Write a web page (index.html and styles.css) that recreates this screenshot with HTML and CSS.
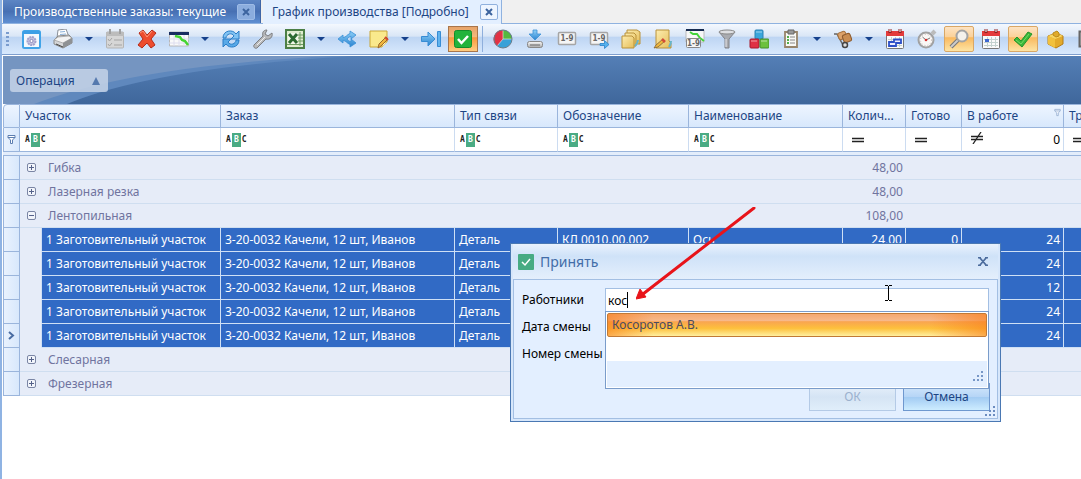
FILE: index.html
```html
<!DOCTYPE html>
<html lang="ru">
<head>
<meta charset="utf-8">
<title>График производства</title>
<link rel="stylesheet" href="styles.css">
</head>
<body>
<svg class="defs" aria-hidden="true">
  <defs>
    <linearGradient id="gBlue" x1="0" y1="0" x2="0" y2="1"><stop offset="0" stop-color="#8fd0f8"/><stop offset="1" stop-color="#2a83d0"/></linearGradient>
    <linearGradient id="gGray" x1="0" y1="0" x2="0" y2="1"><stop offset="0" stop-color="#fafafa"/><stop offset="1" stop-color="#a9a9a9"/></linearGradient>
    <linearGradient id="gYellow" x1="0" y1="0" x2="1" y2="1"><stop offset="0" stop-color="#fdedb0"/><stop offset="1" stop-color="#e5bd58"/></linearGradient>
    <symbol id="expand" viewBox="0 0 9 9"><rect x=".5" y=".5" width="8" height="8" rx="1.5" fill="#f2f5fb" stroke="#7b86a5"/><path d="M2 4.500h5M4.500 2v5" stroke="#55628a"/></symbol>
    <symbol id="collapse" viewBox="0 0 9 9"><rect x=".5" y=".5" width="8" height="8" rx="1.500" fill="#f2f5fb" stroke="#7b86a5"/><path d="M2 4.500h5" stroke="#55628a"/></symbol>
    <symbol id="equal" viewBox="0 0 14 12"><path d="M1 4.500h12M1 7.500h12" stroke="#222" stroke-width="1.300"/></symbol>
    <symbol id="funnel" viewBox="0 0 9 11"><path d="M1 1.500h7v2L5.500 6v3.500h-2V6L1 3.500z M1 3.500h7" fill="#fff" stroke="#5c7eb0"/></symbol>
    <symbol id="calendar" viewBox="0 0 20 20"><rect x="1.500" y="2.500" width="17" height="17" rx="1" fill="#fafafa" stroke="#777"/><path d="M1 2h18v5H1z" fill="#e33b3b"/><path d="M5 0v4M15 0v4" stroke="#8c2020" stroke-width="3"/><path d="M5 0v3M15 0v3" stroke="#fff"/><path d="M3 10.500h14M3 13.500h14M3 16.500h14M6.500 8v10M10.500 8v10M14.500 8v10" stroke="#c3d2cf"/></symbol>
  </defs>
</svg>
<main class="app">
  <nav class="tabs">
    <div class="tab tab-dark"><button class="tab-name">Производственные заказы: текущие</button><button class="close" aria-label="Закрыть"><svg viewBox="0 0 8 8"><path d="M1 1l6 6M7 1L1 7"/></svg></button></div>
    <div class="tab tab-light"><button class="tab-name">График производства [Подробно]</button><button class="close" aria-label="Закрыть"><svg viewBox="0 0 8 8"><path d="M1 1l6 6M7 1L1 7"/></svg></button></div>
  </nav>
  <div class="toolbar">
    <span class="grip"></span>
    <button class="tool" aria-label="Вид"><svg viewBox="0 0 20 20"><rect x="2" y="2" width="17" height="17" rx="1.500" fill="#f4f8fd" stroke="#41a4e8" stroke-width="2"/><path d="M2 2h17v3H2z" fill="#3c9fe6"/><circle cx="10.500" cy="12" r="4" fill="#c8c6e2" stroke="#a3a2cc" stroke-width="2" stroke-dasharray="2 .7"/><circle cx="10.500" cy="12" r="1.600" fill="#fff" stroke="#8887b8"/></svg></button>
    <button class="tool" aria-label="Печать"><svg viewBox="0 0 20 20"><path d="M4 9L5 1l8-1 3 8z" fill="#fff" stroke="#8a9099"/><path d="M7 3l5-.5M7 5.500l6-.5" stroke="#8ab0d8"/><path d="M1 11l4-4 11-1 3 3v5l-9 5-9-4z" fill="#d5d6d8" stroke="#888"/><path d="M1 11l9 3 9-5-3-2-11 1z" fill="#f3f3f3" stroke="#999" stroke-width=".7"/><path d="M3 15l7 3" stroke="#444"/><path d="M10 14v5l9-5V9z" fill="#8e9194"/></svg></button>
    <button class="drop" aria-label="Ещё"></button>
    <button class="tool" aria-label="План" disabled><svg viewBox="0 0 20 20"><rect x="1.500" y="3" width="17" height="16" rx="1" fill="#d6d6d6" stroke="#b4b4b4"/><path d="M1 3h18v4H1z" fill="#bcbcbc"/><path d="M5 0v5M15 0v5" stroke="#a0a0a0" stroke-width="2"/><path d="M3 10l1.500 2L7 9M3 15l1.500 2L7 14M9 11h8M9 16h8" fill="none" stroke="#a4a4a4"/></svg></button>
    <button class="tool" aria-label="Удалить"><svg viewBox="0 0 20 20"><path d="M2 4l4-3 4 5 5-5 4 3-5 6 4 6-4 3-4-5-5 5-4-3 5-6z" fill="#ed4c2e" stroke="#b52b18"/><path d="M3 4l3-2 4 6 5-6" fill="none" stroke="#ff9779"/></svg></button>
    <button class="tool" aria-label="График"><svg viewBox="0 0 20 20"><path d="M.5 3h19v14H.5z" fill="#f9f9f9" stroke="#b8b8b8"/><path d="M0 3h20v3H0z" fill="#182c60"/><path d="M5 6v11M10 6v11M15 6v11M0 10h20M0 14h20" stroke="#dde"/><path d="M6 7l5 1 2 3 3 1 3 4" fill="none" stroke="#45d532" stroke-width="2.500"/></svg></button>
    <button class="drop" aria-label="Ещё"></button>
    <button class="tool" aria-label="Обновить"><svg viewBox="0 0 20 20"><path d="M2 9c0-8 10-9 13-4l3-3v8h-8l3-3C11 3 5 5 5 9z" fill="#82c3f3" stroke="#2a7dc6"/><path d="M18 11c0 8-10 9-13 4l-3 3v-8h8l-3 3c2 4 8 2 8-2z" fill="#58a9e8" stroke="#2a7dc6"/></svg></button>
    <button class="tool" aria-label="Настроить"><svg viewBox="0 0 20 20"><path d="M14 1c-4 0-5 3-4 6l-9 9c-1 2 1 4 3 3l9-9c4 1 7-2 6-6l-4 3-3-2z" fill="#b9babc" stroke="#7c7d80"/><path d="M4 16l8-8" stroke="#eee"/></svg></button>
    <button class="tool" aria-label="Excel"><svg viewBox="0 0 20 20"><rect x="1" y="1" width="18" height="18" fill="#dfeccf" stroke="#4c7f45" stroke-width="2"/><path d="M15 3v14M2 15.500h16M13 6h5M13 9h5M13 12h5" stroke="#6f9c62"/><path d="M3 4h10v11H3z" fill="#f2f7ea"/><path d="M4 5l8 9M12 5l-8 9" stroke="#2c6b31" stroke-width="3"/></svg></button>
    <button class="drop" aria-label="Ещё"></button>
    <button class="tool" aria-label="Разделить"><svg viewBox="0 0 20 20"><path d="M1 10l5-4v2.500c3 0 4-3 7-4V2l6 4-5 4V7.500c-2 0-3 1.500-4 2.500 1 1 2 2.500 4 2.500V10l5 4-6 4v-2.500c-3-1-4-4-7-4V14z" fill="url(#gBlue)" stroke="#3a8fd6" stroke-width=".8"/></svg></button>
    <button class="tool" aria-label="Заметка"><svg viewBox="0 0 20 20"><path d="M1 2h17v11l-5 5H1z" fill="#fae98c" stroke="#c9a739"/><path d="M13 18v-5h5" fill="#fff5bf" stroke="#c9a739"/><path d="M9 19l1-4 7-7 2 2-7 7z" fill="#efb63e" stroke="#9e6a2a"/><path d="M16 8l3 3" stroke="#d34831" stroke-width="2"/></svg></button>
    <button class="drop" aria-label="Ещё"></button>
    <button class="tool" aria-label="В конец"><svg viewBox="0 0 20 20"><path d="M.5 7.500H7V3l7 7-7 7v-4.500H.5z" fill="url(#gBlue)" stroke="#388cd4"/><path d="M16.500 2.500h3v15h-3z" fill="#61b3ed" stroke="#388cd4"/></svg></button>
    <button class="tool pressed" aria-label="Принять"><svg viewBox="0 0 20 20"><rect x="1.500" y="1.500" width="17" height="17" rx="2" fill="#22b33b" stroke="#138d2b"/><path d="M5 10l3.500 4L15 7" fill="none" stroke="#fff" stroke-width="2.500"/></svg></button>
    <span class="separator"></span>
    <button class="tool" aria-label="Диаграмма"><svg viewBox="0 0 20 20"><circle cx="10" cy="10" r="9" fill="#38a1d8"/><path d="M10 10V1a9 9 0 0 0-6 16z" fill="#e13245"/><path d="M10 10V1a9 9 0 0 1 9 9z" fill="#54b83f"/><path d="M10 1v9H19M10 10l-6 7" fill="none" stroke="#eee" stroke-width=".6"/><circle cx="10" cy="10" r="9" fill="none" stroke="#6a7c88"/></svg></button>
    <button class="tool" aria-label="Загрузить"><svg viewBox="0 0 20 20"><path d="M8 1h4v4h4l-6 6-6-6h4z" fill="url(#gBlue)" stroke="#3a91d5" stroke-width=".8"/><rect x="2.500" y="12.500" width="15" height="6" rx="2" fill="url(#gGray)" stroke="#888"/><path d="M5 16h10" stroke="#666"/></svg></button>
    <button class="tool" aria-label="Номера"><svg viewBox="0 0 20 20"><rect x="1.500" y="3.500" width="17" height="12" rx="1" fill="#f5f5f5" stroke="#a5a5a5" stroke-width="1.500"/><text x="10" y="12" class="digits">1-9</text></svg></button>
    <button class="tool" aria-label="Перенумеровать"><svg viewBox="0 0 20 20"><rect x="1.500" y="3.500" width="17" height="12" rx="1" fill="#f5f5f5" stroke="#a5a5a5" stroke-width="1.500"/><text x="10" y="12" class="digits">1-9</text><path d="M11 14.500h4.500v-3l4.500 4-4.500 4v-3H11z" fill="#55b2ee" stroke="#2883cc" stroke-width=".8"/></svg></button>
    <button class="tool" aria-label="Папки"><svg viewBox="0 0 20 20"><path d="M6 1h10l3 2v12H6z" fill="url(#gYellow)" stroke="#ba923a"/><path d="M4 4h9l2 2v11H4z" fill="url(#gYellow)" stroke="#ba923a"/><path d="M1 7h10l2 2v10H1z" fill="url(#gYellow)" stroke="#ba923a"/><path d="M14 17c2-2 3-3 3-6" stroke="#67b4c9" stroke-width="2" fill="none"/></svg></button>
    <button class="tool" aria-label="Изменить"><svg viewBox="0 0 20 20"><path d="M3 1h13v11l2 2v5H3z" fill="url(#gYellow)" stroke="#ba923a"/><path d="M16 18c1-2 2-3 2-6" stroke="#67b4c9" stroke-width="2" fill="none"/><path d="M1 19l2-3 7-6 2 2-7 6z" fill="#efb83d" stroke="#7d6137" stroke-width=".8"/><path d="M9 10l3 3" stroke="#d44c38" stroke-width="2.500"/></svg></button>
    <button class="tool" aria-label="План-график"><svg viewBox="0 0 20 20"><path d="M1 1h18v12H1z" fill="#f7f7f7" stroke="#bbb"/><path d="M1 0h18v2H1z" fill="#182c50"/><path d="M5 3l3 2h4l3 4 4 3" fill="none" stroke="#43d43a" stroke-width="2"/><rect x="1.500" y="9.500" width="14" height="9" rx="1" fill="#f6f6f6" stroke="#888"/><text x="8.500" y="17" class="digits">1-9</text></svg></button>
    <button class="tool" aria-label="Фильтр"><svg viewBox="0 0 20 20"><path d="M2 3l6 7v9h4v-9l6-7z" fill="#a9abb0" stroke="#808289"/><ellipse cx="10" cy="3" rx="8" ry="2" fill="#dedfe2" stroke="#888"/><path d="M9 10v8" stroke="#e9e9ed"/></svg></button>
    <button class="tool" aria-label="Кубики"><svg viewBox="0 0 20 20"><rect x="6" y="1" width="8" height="9" rx="1" fill="#3aa6dc" stroke="#2a82b4"/><rect x="1" y="10" width="9" height="9" rx="1" fill="#df3044" stroke="#a7182d"/><rect x="11" y="10" width="9" height="9" rx="1" fill="#6cc13d" stroke="#44902a"/><path d="M7 3h6M2 12h6M12 12h6" stroke="#ffffff88"/></svg></button>
    <button class="tool" aria-label="Задания"><svg viewBox="0 0 20 20"><path d="M4 3h12v15H4z" fill="#f8f8f5" stroke="#98856b" stroke-width="1.800"/><path d="M7 1h6v4H7z" fill="#999" stroke="#666"/><path d="M6 8h2M6 11h2M6 14h2" stroke="#52af4d" stroke-width="2"/><path d="M9 8h5M9 11h5M9 14h5" stroke="#888"/></svg></button>
    <button class="drop" aria-label="Ещё"></button>
    <button class="tool" aria-label="Тележка"><svg viewBox="0 0 20 20"><path d="M1 5l3 0 6 11h5" fill="none" stroke="#666" stroke-width="1.500"/><rect x="5" y="3" width="8" height="7" rx="2" transform="rotate(-20 9 6)" fill="#dca26a" stroke="#a5713d"/><rect x="10" y="5" width="8" height="8" rx="2" transform="rotate(-20 14 9)" fill="#c98d52" stroke="#8f5b2d"/><circle cx="12" cy="16" r="2.500" fill="#ddd" stroke="#444" stroke-width="1.500"/></svg></button>
    <button class="drop" aria-label="Ещё"></button>
    <button class="tool" aria-label="Календарь графика"><svg viewBox="0 0 20 20"><use href="#calendar"/><path d="M4 17v-4h5v-2.500h7V14h-5v3z" fill="#eef" stroke="#2d50c8" stroke-width="1.800"/></svg></button>
    <button class="tool" aria-label="Секундомер"><svg viewBox="0 0 20 20"><path d="M15 5l3-3" stroke="#bbb" stroke-width="4"/><circle cx="9" cy="11" r="7.500" fill="#faf8f6" stroke="#a1a1a1" stroke-width="2"/><path d="M5.500 8l3.500 3 4-2" fill="none" stroke="#777"/><circle cx="9" cy="11" r="5.500" fill="none" stroke="#b8a9a9" stroke-width=".8" stroke-dasharray="1 2"/><circle cx="9" cy="11" r="1.300" fill="#d42d2d"/></svg></button>
    <button class="tool checked" aria-label="Поиск"><svg viewBox="0 0 20 20"><path d="M2 18l7-7" stroke="#777" stroke-width="4"/><path d="M2 18l7-7" stroke="#ccc" stroke-width="2"/><circle cx="13" cy="7" r="5.500" fill="#f4f1ec" stroke="#a3a3a3" stroke-width="2"/></svg></button>
    <button class="tool" aria-label="Календарь"><svg viewBox="0 0 20 20"><use href="#calendar"/><path d="M4 10h4v3H4z" fill="#3b67d0"/></svg></button>
    <button class="tool checked" aria-label="Готово"><svg viewBox="0 0 20 20"><path d="M1 11l3-3 4 4 7-9 4 2L9 18z" fill="#39b838" stroke="#23932b"/><path d="M3 11l5 4 8-10" fill="none" stroke="#76d868"/></svg></button>
    <button class="tool" aria-label="Коробка"><svg viewBox="0 0 20 20"><path d="M3 7l8-3 7 3v8l-7 4-8-4z" fill="#e3aa2b" stroke="#b47c15"/><path d="M3 7l7 3 8-3-7-3z" fill="#f8d561"/><path d="M10 10v9l-7-4V7z" fill="#f1c13e"/><path d="M8 4l4-2 2 2v3l-3 1-3-2z" fill="#e0aa2b" stroke="#b98a1c"/></svg></button>
    <button class="tool tool-last" aria-label="Окно"><svg viewBox="0 0 20 20"><path d="M2.500 2.500h15v15h-15z" fill="#bbb" stroke="#666" stroke-width="2"/></svg></button>
  </div>
  <section class="grid">
    <div class="band">
      <svg class="band-art" viewBox="0 0 400 48" aria-hidden="true"><path d="M64 48Q150 12 350 0H0V48z" fill="#5f88bd"/><path d="M31 48Q130 10 330 0H0V48z" fill="#7595c1"/></svg>
      <button class="group-chip">Операция <i class="sort"></i></button>
    </div>
    <table>
      <colgroup><col class="c-mark"><col class="c-indent"><col class="c-area"><col class="c-order"><col class="c-type"><col class="c-code"><col class="c-name"><col class="c-count"><col class="c-ready"><col class="c-work"><col></colgroup>
      <thead>
        <tr class="head"><th></th><th colspan="2">Участок</th><th>Заказ</th><th>Тип связи</th><th>Обозначение</th><th>Наименование</th><th>Колич...</th><th>Готово</th><th><div class="filtered">В работе<svg class="pin"><use href="#funnel"/></svg></div></th><th>Тр</th></tr>
        <tr class="filter"><td class="mark"><svg class="fun"><use href="#funnel"/></svg></td><td colspan="2"><span class="abc">A<b>B</b>C</span></td><td><span class="abc">A<b>B</b>C</span></td><td><span class="abc">A<b>B</b>C</span></td><td><span class="abc">A<b>B</b>C</span></td><td><span class="abc">A<b>B</b>C</span></td><td><svg class="op"><use href="#equal"/></svg></td><td><svg class="op"><use href="#equal"/></svg></td><td><div class="filtered"><svg class="op"><use href="#equal"/><path d="M3 12L11 0" stroke="#222" stroke-width="1.300"/></svg>0</div></td><td><svg class="op"><use href="#equal"/></svg></td></tr>
        <tr class="gap"><td colspan="11"></td></tr>
      </thead>
      <tbody>
        <tr class="group"><td class="mark"></td><td colspan="6"><button class="node"><svg><use href="#expand"/></svg>Гибка</button></td><td class="num">48,00</td><td colspan="3"></td></tr>
        <tr class="group"><td class="mark"></td><td colspan="6"><button class="node"><svg><use href="#expand"/></svg>Лазерная резка</button></td><td class="num">48,00</td><td colspan="3"></td></tr>
        <tr class="group"><td class="mark"></td><td colspan="6"><button class="node"><svg><use href="#collapse"/></svg>Лентопильная</button></td><td class="num">108,00</td><td colspan="3"></td></tr>
        <tr class="row"><td class="mark"></td><td class="indent"></td><td>1 Заготовительный участок</td><td>3-20-0032 Качели, 12 шт, Иванов</td><td>Деталь</td><td>КЛ 0010.00.002</td><td>Ось</td><td class="num">24,00</td><td class="num">0</td><td class="num">24</td><td></td></tr>
        <tr class="row"><td class="mark"></td><td class="indent"></td><td>1 Заготовительный участок</td><td>3-20-0032 Качели, 12 шт, Иванов</td><td>Деталь</td><td></td><td></td><td></td><td></td><td class="num">24</td><td></td></tr>
        <tr class="row"><td class="mark"></td><td class="indent"></td><td>1 Заготовительный участок</td><td>3-20-0032 Качели, 12 шт, Иванов</td><td>Деталь</td><td></td><td></td><td></td><td></td><td class="num">12</td><td></td></tr>
        <tr class="row"><td class="mark"></td><td class="indent"></td><td>1 Заготовительный участок</td><td>3-20-0032 Качели, 12 шт, Иванов</td><td>Деталь</td><td></td><td></td><td></td><td></td><td class="num">24</td><td></td></tr>
        <tr class="row"><td class="mark"><svg class="current" viewBox="0 0 7 9"><path d="M1 1l4 3.500L1 8" fill="none" stroke="#4a6da3" stroke-width="2"/></svg></td><td class="indent"></td><td>1 Заготовительный участок</td><td>3-20-0032 Качели, 12 шт, Иванов</td><td>Деталь</td><td></td><td></td><td></td><td></td><td class="num">24</td><td></td></tr>
        <tr class="group"><td class="mark"></td><td colspan="6"><button class="node"><svg><use href="#expand"/></svg>Слесарная</button></td><td></td><td colspan="3"></td></tr>
        <tr class="group"><td class="mark"></td><td colspan="6"><button class="node"><svg><use href="#expand"/></svg>Фрезерная</button></td><td></td><td colspan="3"></td></tr>
      </tbody>
    </table>
  </section>
</main>

<form class="dialog" role="dialog" aria-labelledby="dialog-title">
  <header class="dialog-head">
    <svg class="dialog-icon" viewBox="0 0 16 16"><rect width="16" height="16" rx="1" fill="#47ab83"/><path d="M4 8l3 3 5-6" fill="none" stroke="#fff" stroke-width="1.500"/></svg>
    <span id="dialog-title" class="dialog-title">Принять</span>
    <button type="button" class="dialog-close" aria-label="Закрыть"><svg viewBox="0 0 10 9"><path d="M0 .5h3M7 .5h3M0 8.500h3M7 8.500h3M2 1l6 7M8 1L2 8" stroke="#4c6c9d" stroke-width="1.800"/></svg></button>
  </header>
  <div class="dialog-body">
    <div class="fields">
      <label for="workers">Работники</label>
      <div class="combo">
        <input id="workers" type="text" value="кос">
        <span class="caret"></span>
        <div class="popup">
          <button type="button" class="option">Косоротов А.В.</button>
          <div class="popup-foot"><svg class="dots" viewBox="0 0 11 11"><path d="M9 0h2v2H9zM9 4h2v2H9zM9 8h2v2H9zM5 4h2v2H5zM5 8h2v2H5zM1 8h2v2H1z" fill="#7797c7"/></svg></div>
        </div>
      </div>
      <label for="date">Дата смены</label>
      <input id="date" type="text">
      <label for="shift">Номер смены</label>
      <input id="shift" type="text">
    </div>
    <div class="actions"><button type="button" class="btn" disabled>ОК</button><button type="button" class="btn btn-hot">Отмена</button></div>
    <svg class="dots dots-corner" viewBox="0 0 11 11"><path d="M9 0h2v2H9zM9 4h2v2H9zM9 8h2v2H9zM5 4h2v2H5zM5 8h2v2H5zM1 8h2v2H1z" fill="#6b8cc0"/></svg>
  </div>
</form>
<svg class="arrow" viewBox="0 0 122 94" aria-hidden="true"><path d="M118 1L7 87" stroke="#e8141a" stroke-width="3" stroke-linecap="round"/><path d="M0 92l4-10 6 8z" fill="#e8141a" stroke="#e8141a"/></svg>
<svg class="ibeam" viewBox="0 0 7 16" aria-hidden="true"><path d="M0 .5h3M4 .5h3M3.500 1v14M0 15.500h3M4 15.500h3" stroke="#000"/></svg>
</body>
</html>
```
FILE: styles.css
```css
* { box-sizing: border-box; }
body {
  margin: 0;
  min-height: 100vh;
  position: relative;
  overflow: hidden;
  background: #fff;
  font: 12px/16px "Noto Sans", "DejaVu Sans Condensed", sans-serif;
  color: #000;
}
button, input { font: inherit; color: inherit; margin: 0; }
button { padding: 0; border: 0; background: none; }
svg { display: block; }
.defs { position: absolute; width: 0; height: 0; }
.app { border-left: 2px solid #8fb3e3; min-height: 100vh; }

.tabs { display: flex; height: 24px; background: #f0f0f0; border-bottom: 1px solid #8fb2e0; }
.tab { display: flex; align-items: center; gap: 11px; height: 23px; white-space: nowrap; }
.tab-dark {
  margin-left: 1px;
  padding: 0 5px 0 11px;
  color: #fff;
  background: linear-gradient(#5d86c4, #4770b3 50%, #5f8fd2);
  border-right: 1px solid #3f66a8;
}
.tab-light {
  margin-left: 2px;
  padding: 0 3px 0 9px;
  height: 24px;
  color: #1d4584;
  background: #e3efff;
  border-right: 1px solid #8fb2e0;
}
.close {
  display: grid;
  place-items: center;
  width: 18px;
  height: 16px;
  border: 1px solid #8fb0dd;
  border-radius: 2px;
  background: #eef5ff;
}
.close svg { width: 8px; height: 8px; stroke: #3c649f; stroke-width: 2; }
.tab-dark .close { background: #8badde; border-color: #9dbbe6; }

.toolbar {
  display: flex;
  align-items: center;
  height: 31px;
  overflow: hidden;
  border-bottom: 1px solid #7f9fce;
  background: linear-gradient(#f4f8fe, #dae6f6 40%, #bed5f3 45%, #d8e9fd);
}
.grip { flex: none; width: 3px; height: 14px; margin: 0 6px 0 4px; background: repeating-linear-gradient(#7a9cce 0 2px, transparent 2px 4px); }
.tool { display: grid; place-items: center; flex: none; width: 32px; height: 26px; }
.tool svg { width: 20px; height: 20px; }
.drop { flex: none; display: grid; place-items: center; width: 20px; height: 26px; }
.drop::after { content: ""; border: 4px solid transparent; border-top-color: #16418c; border-bottom: 0; }
.pressed, .checked { width: 30px; margin: 0 1px; }
.pressed { border: 1px solid #a9754a; background: linear-gradient(#e6a369, #f5b87b 40%, #f99a3d 45%, #ffcc80); }
.checked { border: 1px solid #d9a765; border-radius: 2px; background: linear-gradient(#fde3c3, #fbd29a 40%, #f9b95f 45%, #fde4a4); }
.separator { flex: none; width: 8px; height: 26px; background: linear-gradient(#8fafdc, #8fafdc) 3px 0 / 1px 100% no-repeat; }
.digits { font: bold 8px "DejaVu Sans Condensed", sans-serif; fill: #666; text-anchor: middle; }

.grid { margin: 1px 0 0 1px; overflow: hidden; }
.band { position: relative; padding: 13px 7px 12px; background: linear-gradient(#547fb6, #3f679b); }
.band-art { position: absolute; top: 0; left: 0; width: 400px; height: 48px; }
.group-chip {
  position: relative;
  display: flex;
  align-items: center;
  justify-content: space-between;
  width: 98px;
  height: 23px;
  padding: 0 8px 0 6px;
  border-radius: 3px;
  background: #c5d3e8d9;
  color: #1d4584;
}
.sort { border: 4px solid transparent; border-bottom: 8px solid #5579ae; border-top: 0; }

table { width: 100%; table-layout: fixed; border-collapse: separate; border-spacing: 0; }
.c-mark { width: 17px; }
.c-indent { width: 22px; }
.c-area { width: 179px; }
.c-order { width: 234px; }
.c-type { width: 103px; }
.c-code { width: 131px; }
.c-name { width: 154px; }
.c-count { width: 63px; }
.c-ready { width: 56px; }
.c-work { width: 102px; }
th, td { height: 24px; padding: 0 3px 0 4px; overflow: hidden; white-space: nowrap; text-align: left; font-weight: normal; vertical-align: middle; }
.head th { padding-left: 5px; padding-right: 2px; color: #1d4584; border-right: 1px solid #9ab5dc; border-bottom: 1px solid #9ab5dc; border-top: 1px solid #9ab5dc; background: linear-gradient(#edf5ff, #d8e8fc); }
.head th:first-child { border-left: 1px solid #9ab5dc; border-top-left-radius: 4px; }
.head th:last-child { padding-right: 0; }
.head th:last-child, .filter td:last-child, .row td:last-child { border-right: 0; }
.filter td { padding-left: 5px; border-right: 1px solid #ccdcf1; border-bottom: 1px solid #9ab5dc; background: #fff; }
.filtered { display: flex; justify-content: space-between; }
.pin { width: 7px; height: 9px; opacity: .6; }
.fun { width: 9px; height: 11px; }
.op { width: 14px; height: 12px; margin-left: 3px; }
.abc { display: flex; align-items: center; gap: 1px; font: bold 8px/14px "DejaVu Sans Mono", monospace; color: #222; }
.abc b { width: 9px; text-align: center; background: #4aab84; color: #fff; }
.gap td { height: 4px; padding: 0; background: #e3edfb; border-bottom: 1px solid #9ab5dc; }
td.mark, .filter td.mark { padding: 0 0 0 3px; background: linear-gradient(90deg, #e9f2fe, #d8e8fc); border: 1px solid #9ab5dc; border-top: 0; }
.group td { color: #70749f; background: #e6ecf8; border-bottom: 1px solid #cfdef0; }
.group td.mark { border-bottom-color: #9ab5dc; background: linear-gradient(90deg, #e9f2fe, #d8e8fc); }
.node { display: flex; align-items: center; gap: 12px; padding-left: 3px; }
.node svg { width: 9px; height: 9px; }
.row td { color: #fff; background: #316ac5; border-right: 1px solid #cfe0f5; border-bottom: 1px solid #cfe0f5; }
.row td.mark { border-color: #9ab5dc; background: linear-gradient(90deg, #e9f2fe, #d8e8fc); }
.row td.indent { background: #e6ecf8; border-bottom-color: #e6ecf8; }
td.num { text-align: right; }
.current { width: 7px; height: 9px; margin-left: 1px; }

.dialog {
  position: absolute;
  left: 510px;
  top: 243px;
  width: 491px;
  padding: 0 2px 2px;
  border: 1px solid #4a78b3;
  background: #d7e7fb;
}
.dialog-head { display: flex; align-items: center; height: 35px; padding: 0 10px 0 5px; background: linear-gradient(#e9f2fd, #cfe2f8 35%, #e4effc); }
.dialog-icon { width: 16px; height: 16px; }
.dialog-title { flex: 1; margin-left: 6px; font-size: 14px; color: #426da8; }
.dialog-close svg { width: 10px; height: 9px; }
.dialog-body { position: relative; padding: 8px 7px 7px 8px; border: 1px solid #a3bfe3; background: #e3efff; }
.fields { display: grid; grid-template-columns: 80px 1fr; column-gap: 3px; row-gap: 3px; align-items: center; padding-right: 1px; }
.fields label { white-space: nowrap; }
.fields input { display: block; width: 100%; height: 24px; padding: 0 2px; border: 1px solid #a3bfe3; background: #fff; outline: 0; }
.combo { position: relative; }
.caret { position: absolute; left: 22px; top: 4px; width: 1px; height: 16px; background: #000; }
.popup { position: absolute; z-index: 1; left: 0; right: 0; top: 23px; padding: 1px; border: 1px solid #7a9cca; background: #fff; }
.option {
  display: block;
  width: 100%;
  height: 24px;
  padding-left: 4px;
  border: 1px solid #c27a35;
  border-radius: 2px;
  text-align: left;
  color: #4b4b60;
  background: linear-gradient(90deg, #f97e1a99, transparent 12% 85%, #f97e1a99), linear-gradient(#f5a870, #f7b98a 30%, #f9a550 35%, #fdc03c 65%, #fff0a0);
}
.popup-foot { display: flex; justify-content: flex-end; align-items: flex-end; height: 26px; margin-top: 24px; padding: 0 4px 5px; background: #e3efff; }
.dots { width: 11px; height: 11px; }
.actions { display: flex; justify-content: flex-end; gap: 7px; margin-top: 17px; }
.btn { width: 87px; height: 28px; border: 1px solid #6f98cf; color: #1d4584; background: linear-gradient(#d5e8fc, #b5d5f6 50%, #a3ccf3 52%, #cdecff); }
.btn:disabled { color: #9bb1ce; border-color: #b4cae6; background: linear-gradient(#e8f1fb, #d5e4f4 50%, #e0eefa); }
.dots-corner { position: absolute; right: 2px; bottom: 1px; }

.arrow { position: absolute; left: 636px; top: 207px; width: 122px; height: 94px; }
.ibeam { position: absolute; left: 885px; top: 285px; width: 7px; height: 16px; }
```
